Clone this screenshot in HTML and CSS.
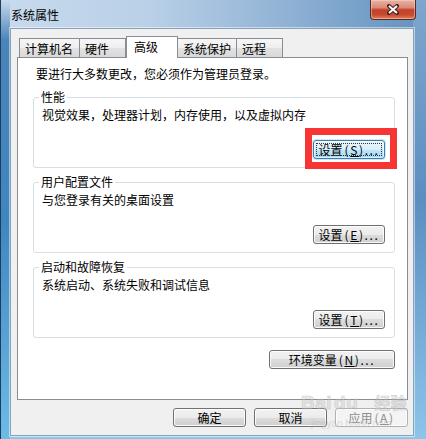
FILE: index.html
```html
<!DOCTYPE html>
<html lang="zh-CN">
<head>
<meta charset="utf-8">
<title>系统属性</title>
<link rel="stylesheet" href="styles.css">
</head>
<body>
<div class="window">
  <div class="titlebar">
    <span class="title">系统属性</span>
    <div class="close">
      <svg width="12" height="11" viewBox="0 0 12 11"><path d="M2 2 L10 9 M10 2 L2 9" stroke="#4a2520" stroke-width="4" stroke-linecap="square" fill="none"/><path d="M2 2 L10 9 M10 2 L2 9" stroke="#ffffff" stroke-width="2" fill="none"/></svg>
    </div>
  </div>
  <div class="client">
    <div class="tabs">
      <div class="tab w1">计算机名</div>
      <div class="tab w2">硬件</div>
      <div class="tab sel">高级</div>
      <div class="tab w4">系统保护</div>
      <div class="tab w5">远程</div>
    </div>
    <div class="panel">
      <p class="note">要进行大多数更改，您必须作为管理员登录。</p>
      <fieldset class="group">
        <legend>性能</legend>
        <p class="desc">视觉效果，处理器计划，内存使用，以及虚拟内存</p>
        <div class="row"><span class="mark"><button class="btn focus">设置<span class="key">(<u>S</u>)...</span></button></span></div>
      </fieldset>
      <fieldset class="group">
        <legend>用户配置文件</legend>
        <p class="desc">与您登录有关的桌面设置</p>
        <div class="row"><button class="btn">设置<span class="key">(<u>E</u>)...</span></button></div>
      </fieldset>
      <fieldset class="group">
        <legend>启动和故障恢复</legend>
        <p class="desc">系统启动、系统失败和调试信息</p>
        <div class="row"><button class="btn">设置<span class="key">(<u>T</u>)...</span></button></div>
      </fieldset>
      <div class="row env"><button class="btn wide">环境变量<span class="key">(<u>N</u>)...</span></button></div>
    </div>
    <div class="actions">
      <button class="btn act">确定</button>
      <button class="btn act">取消</button>
      <button class="btn act disabled">应用<span class="key">(<u>A</u>)</span></button>
    </div>
  </div>
  <div class="watermark">
    <span class="wm-logo">Bai<span class="wm-du">du</span><span class="wm-cn">经验</span></span>
    <span class="wm-url">jingyan.baidu.com</span>
  </div>
</div>
</body>
</html>
```

FILE: styles.css
```css
html, body {
  margin: 0;
  padding: 0;
}
body {
  width: 426px;
  height: 439px;
  overflow: hidden;
  font-family: "Noto Sans CJK SC", "Liberation Sans", sans-serif;
  font-size: 12px;
  color: #000;
}
.window {
  position: relative;
  width: 426px;
  height: 439px;
  box-sizing: border-box;
  display: flex;
  flex-direction: column;
  border-left: 1px solid #1d3c5e;
  background:
    linear-gradient(to bottom, rgba(200,218,236,1) 0, #4a84b8 40px, #3f86c0 220px, #6dbbe6 439px) 0 0 / 9px 100% no-repeat,
    linear-gradient(to bottom, #7fa6cc 0, #5b8fc0 200px, #8bc5ea 439px) 100% 0 / 13px 100% no-repeat,
    linear-gradient(to bottom, transparent 0, transparent 432px, #9bd3f2 436px, #7ec3ea 439px) 0 0 / 100% 100% no-repeat,
    linear-gradient(to right, #c8daed 0, #b9d0e7 35%, #93b4d6 65%, #6f9bc5 90%, #6890bc 100%);
}
.titlebar {
  height: 28px;
  display: flex;
  align-items: flex-start;
  padding: 0 10px 0 10px;
  flex: none;
}
.title {
  margin-top: 9px;
  line-height: 12px;
  font-size: 12px;
}
.close {
  margin-left: auto;
  width: 46px;
  height: 20px;
  box-sizing: border-box;
  border: 1px solid #5a2a22;
  border-top: none;
  border-radius: 0 0 4px 4px;
  background: linear-gradient(to bottom, #e8b3a4 0, #d98b78 40%, #c4402a 52%, #c64a30 78%, #e2805f 100%);
  box-shadow: inset 0 0 0 1px rgba(255, 220, 210, 0.45);
  display: flex;
  align-items: center;
  justify-content: center;
}
.close svg {
  display: block;
  margin-top: -1px;
}
.client {
  flex: 1;
  margin: 0 12px 3px 9px;
  border: 1px solid #8aa0b8;
  background: #f0f0f0;
  padding: 7px 5px 0 6px;
  display: flex;
  flex-direction: column;
  box-shadow: 0 0 0 1px rgba(255, 255, 255, 0.5);
}
.tabs {
  display: flex;
  align-items: flex-end;
  height: 21px;
  margin-left: 2px;
  position: relative;
  z-index: 1;
}
.tab {
  box-sizing: border-box;
  height: 19px;
  border: 1px solid #898c95;
  border-bottom: none;
  padding: 4px 0 0 5px;
  line-height: 12px;
  white-space: nowrap;
  background: linear-gradient(to bottom, #f6f6f6 0, #eeeeee 50%, #e2e2e2 52%, #d9d9d9 100%);
}
.tab + .tab {
  margin-left: -1px;
}
.w1 { width: 61px; }
.w2 { width: 47px; }
.w4 { width: 60px; }
.w5 { width: 47px; }
.tab.sel {
  width: 52px;
  height: 22px;
  margin-bottom: -1px;
  margin-left: 0;
  margin-right: -1px;
  padding-left: 7px;
  background: #fff;
}
.tab.sel + .tab {
  margin-left: 0;
}
.panel {
  height: 343px;
  box-sizing: border-box;
  background: #fff;
  border: 1px solid #898c95;
  padding: 10px 12px 0 15px;
  flex: none;
}
.note {
  margin: 0 0 11px 3px;
  line-height: 12px;
}
.group {
  margin: 0 0 8px 0;
  border: 1px solid #d5dfe5;
  border-radius: 3px;
  padding: 0 9px 8px 8px;
  min-width: 0;
}
.group legend {
  padding: 0 2px;
  margin-left: -3px;
  line-height: 12px;
}
.desc {
  margin: 6px 0 0 0;
  line-height: 12px;
}
.row {
  display: flex;
  justify-content: flex-end;
  margin-top: 19px;
}
.row.env {
  margin-top: 12px;
}
.btn {
  box-sizing: border-box;
  height: 19px;
  width: 72px;
  padding: 0;
  border: 1px solid #707070;
  border-radius: 3px;
  background: linear-gradient(to bottom, #f2f2f2 0, #ebebeb 50%, #dddddd 50%, #cfcfcf 100%);
  box-shadow: inset 0 0 0 1px rgba(255, 255, 255, 0.85);
  font-family: "Noto Sans CJK SC", "Liberation Sans", sans-serif;
  font-size: 12px;
  line-height: 12px;
  color: #000;
  position: relative;
  white-space: nowrap;
}
.key {
  margin-left: 2px;
  letter-spacing: 1.6px;
}
.btn u {
  text-underline-offset: 1px;
}
.btn.wide {
  width: 126px;
}
.btn.focus {
  border-color: #3c7fb1;
  background: linear-gradient(to bottom, #eaf6fd 0, #d9f0fc 50%, #bee6fd 50%, #a7d9f5 100%);
  box-shadow: inset 0 0 0 1px rgba(255, 255, 255, 0.6), 0 0 0 1px rgba(120, 180, 220, 0.35);
}
.btn.focus::before {
  content: "";
  position: absolute;
  left: 2px;
  top: 2px;
  right: 2px;
  bottom: 2px;
  border: 1px dotted #333;
}
.mark {
  position: relative;
  display: block;
}
.mark::after {
  content: "";
  position: absolute;
  left: -8px;
  top: -12px;
  right: -12px;
  bottom: -10px;
  border: 7px solid #f83535;
  pointer-events: none;
}
.actions {
  display: flex;
  justify-content: flex-end;
  gap: 8px;
  margin-top: 8px;
}
.btn.act {
  width: 73px;
}
.btn.disabled {
  color: #8d8d8d;
  border-color: #adb2b5;
  background: #f4f4f4;
}
.watermark {
  position: absolute;
  left: 300px;
  top: 383px;
  display: flex;
  flex-direction: column;
  pointer-events: none;
  opacity: 0.45;
}
.wm-logo {
  font-family: "Liberation Sans", sans-serif;
  font-weight: bold;
  font-size: 19px;
  line-height: 22px;
  color: #d0d0d0;
  -webkit-text-stroke: 0.6px #a0a0a0;
  letter-spacing: 0.5px;
  padding-top: 8px;
}
.wm-du {
  margin-left: 2px;
}
.wm-cn {
  font-family: "Noto Sans CJK SC", sans-serif;
  font-size: 16px;
  margin-left: 16px;
}
.wm-url {
  font-family: "Liberation Sans", sans-serif;
  font-size: 10px;
  line-height: 12px;
  color: #b8b8b8;
  margin-left: 10px;
  margin-top: 4px;
}
```
